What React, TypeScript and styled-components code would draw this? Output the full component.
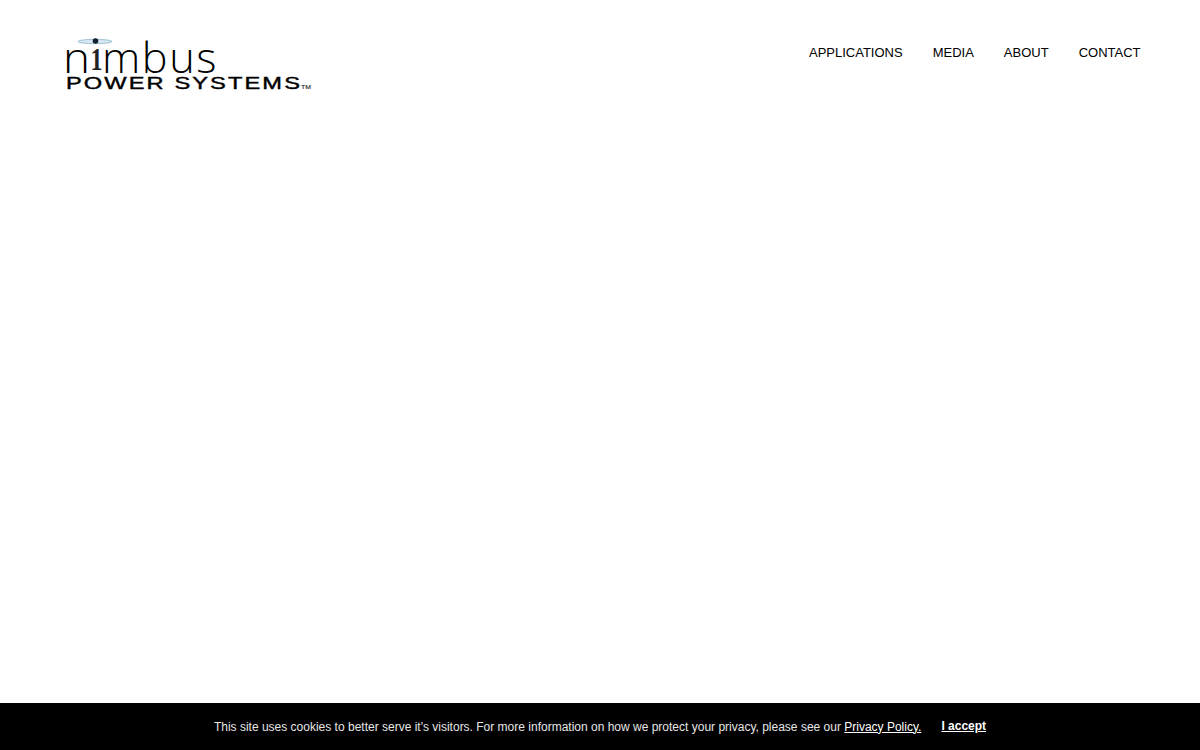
import React from 'react';
import styled, { createGlobalStyle } from 'styled-components';

const GlobalStyle = createGlobalStyle`
  html, body {
    margin: 0;
    padding: 0;
    background: #ffffff;
    font-family: "Liberation Sans", Arial, sans-serif;
  }
`;

const Page = styled.div`
  min-height: 750px;
`;

const Header = styled.header`
  display: flex;
  justify-content: space-between;
  align-items: flex-start;
  padding: 36px 59.5px 0 62px;
`;

const LogoLink = styled.a`
  display: block;
  width: 252px;
  height: 58px;
`;

const LogoSvg = styled.svg`
  display: block;
  overflow: visible;
`;

const Nav = styled.nav`
  display: flex;
  gap: 30px;
  padding-top: 9px;
`;

const NavLink = styled.a`
  font-size: 13px;
  line-height: 15px;
  color: #000000;
  text-decoration: none;
`;

const CookieBar = styled.div`
  position: fixed;
  left: 0;
  right: 0;
  bottom: 0;
  height: 47px;
  background: #000000;
  display: flex;
  justify-content: center;
  align-items: center;
  gap: 20px;
  font-size: 12px;
  color: #e6e6e6;
`;

const CookieText = styled.span`
  line-height: 14px;
`;

const PolicyLink = styled.a`
  color: #ffffff;
  text-decoration: underline;
`;

const AcceptLink = styled.a`
  color: #ffffff;
  font-weight: bold;
  text-decoration: underline;
  position: relative;
  top: -1px;
`;

const Logo = () => (
  <LogoSvg width="252" height="58" viewBox="0 0 252 58">
    <ellipse cx="33" cy="5.5" rx="17" ry="2.2" fill="#d6e8f3" stroke="#8fb2ca" strokeWidth="0.8" />
    <circle cx="33.5" cy="5" r="2.8" fill="#10202c" />
    <text x="1" y="37" fontFamily="'Open Sans', sans-serif" fontWeight="300" fontSize="42" textLength="27" lengthAdjust="spacingAndGlyphs" fill="#000">n</text>
    <text x="28.5" y="34" fontFamily="'Liberation Serif', serif" fontWeight="bold" fontSize="31" textLength="12" lengthAdjust="spacingAndGlyphs" fill="#222">1</text>
    <text x="40" y="37" fontFamily="'Open Sans', sans-serif" fontWeight="300" fontSize="42" letterSpacing="1.5" textLength="116" lengthAdjust="spacingAndGlyphs" fill="#000">mbus</text>
    <text x="4" y="53" fontFamily="'Liberation Sans', sans-serif" fontSize="17" letterSpacing="1.5" textLength="236" lengthAdjust="spacingAndGlyphs" stroke="#000" strokeWidth="0.4" fill="#000">POWER SYSTEMS</text>
    <text x="239" y="53" fontFamily="'Liberation Sans', sans-serif" fontSize="5.5" textLength="10" lengthAdjust="spacingAndGlyphs" stroke="#333" strokeWidth="0.15" fill="#333">TM</text>
  </LogoSvg>
);

export default function App() {
  return (
    <Page>
      <GlobalStyle />
      <Header>
        <LogoLink href="#">
          <Logo />
        </LogoLink>
        <Nav>
          <NavLink href="#">APPLICATIONS</NavLink>
          <NavLink href="#">MEDIA</NavLink>
          <NavLink href="#">ABOUT</NavLink>
          <NavLink href="#">CONTACT</NavLink>
        </Nav>
      </Header>
      <CookieBar>
        <CookieText>
          This site uses cookies to better serve it's visitors. For more information on how we protect your privacy, please see our{' '}
          <PolicyLink href="#">Privacy Policy.</PolicyLink>
        </CookieText>
        <AcceptLink href="#">I accept</AcceptLink>
      </CookieBar>
    </Page>
  );
}
